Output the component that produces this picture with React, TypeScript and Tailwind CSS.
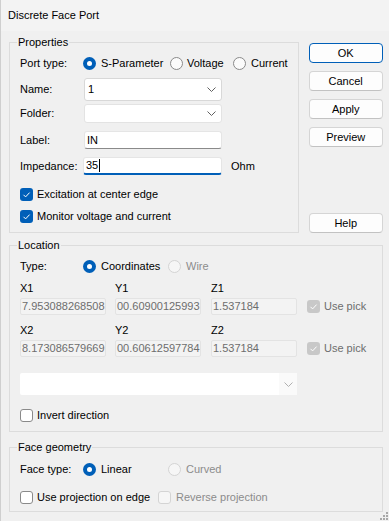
import React from "react";

function Radio({ checked, disabled }: { checked?: boolean; disabled?: boolean }) {
  if (checked) {
    return (
      <span className="flex h-[13px] w-[13px] shrink-0 items-center justify-center rounded-full bg-[#005fb8]">
        <span className="h-[5px] w-[5px] rounded-full bg-white" />
      </span>
    );
  }
  return (
    <span
      className={
        disabled
          ? "h-[13px] w-[13px] shrink-0 rounded-full border border-[#d4d4d4] bg-[#f6f6f6]"
          : "h-[13px] w-[13px] shrink-0 rounded-full border border-[#8a8a8a] bg-[#fbfbfb]"
      }
    />
  );
}

function Check({ checked, disabled }: { checked?: boolean; disabled?: boolean }) {
  if (checked) {
    return (
      <span
        className={
          disabled
            ? "flex h-[13px] w-[13px] shrink-0 items-center justify-center rounded-[3px] bg-[#c8c8c8]"
            : "flex h-[13px] w-[13px] shrink-0 items-center justify-center rounded-[3px] bg-[#005fb8]"
        }
      >
        <svg width="13" height="13" viewBox="0 0 13 13" fill="none" aria-hidden="true">
          <path d="M3.5 6.8 5.6 8.9 9.6 4.6" stroke="white" strokeWidth="1" />
        </svg>
      </span>
    );
  }
  return (
    <span
      className={
        disabled
          ? "h-[13px] w-[13px] shrink-0 rounded-[3px] border border-[#d4d4d4] bg-[#f6f6f6]"
          : "h-[13px] w-[13px] shrink-0 rounded-[3px] border border-[#8a8a8a] bg-white"
      }
    />
  );
}

function Chevron({ color = "#606060" }: { color?: string }) {
  return (
    <svg width="9" height="5" viewBox="0 0 9 5" fill="none" aria-hidden="true">
      <path d="M0.5 0.5 4.5 4.5 8.5 0.5" stroke={color} strokeWidth="1" />
    </svg>
  );
}

function Btn({ label, primary }: { label: string; primary?: boolean }) {
  return (
    <div
      className={
        primary
          ? "flex h-[20px] w-[74px] items-center justify-center rounded-[4px] border border-[#005fb8] bg-[#fdfdfd]"
          : "flex h-[20px] w-[74px] items-center justify-center rounded-[4px] border border-[#d5d5d5] border-b-[#c2c2c2] bg-[#fdfdfd]"
      }
    >
      {label}
    </div>
  );
}

function Coord({ label, value }: { label: string; value: string }) {
  return (
    <div className="flex w-[86px] flex-col">
      <div className="flex h-[16px] items-center">{label}</div>
      <div className="mt-[2px] flex h-[17px] items-center overflow-hidden whitespace-nowrap rounded-[2px] border border-[#e3e3e3] bg-[#f3f3f3] pl-[1px] text-[#6d6d6d]">
        {value}
      </div>
    </div>
  );
}

function UsePick() {
  return (
    <div className="ml-[10px] mt-[18px] flex h-[17px] items-center gap-[4px] text-[#6d6d6d]">
      <Check checked disabled />
      <span>Use pick</span>
    </div>
  );
}

export default function App() {
  return (
    <div className="relative h-[521px] w-[389px] overflow-hidden border-l border-[#cfcfcf] bg-[#f0f0f0] font-['Liberation_Sans',Arial,sans-serif] text-[11px] leading-none text-black">
      <div className="flex h-[31px] items-center bg-[#f3f3f3] pl-[7px] text-[11px]">Discrete Face Port</div>

      <div className="px-[8px]">
        <div className="mt-[3px] flex">
          {/* Properties */}
          <fieldset className="h-[199px] w-[289px] border border-[#dcdcdc]">
            <legend className="ml-[7px] h-[16px] px-[1px] leading-[16px]">Properties</legend>
            <div className="px-[10px]">
              <div className="mt-[5px] flex h-[16px] items-center">
                <span className="w-[63px]">Port type:</span>
                <div className="flex w-[87px] items-center gap-[5px]">
                  <Radio checked />
                  <span>S-Parameter</span>
                </div>
                <div className="flex w-[63px] items-center gap-[4px]">
                  <Radio />
                  <span>Voltage</span>
                </div>
                <div className="flex items-center gap-[5px]">
                  <Radio />
                  <span>Current</span>
                </div>
              </div>

              <div className="mt-[7px] flex h-[23px] items-center">
                <span className="w-[64px]">Name:</span>
                <div className="flex h-[23px] w-[138px] items-center justify-between rounded-[3px] border border-[#d8d8d8] bg-white pl-[3px] pr-[5px]">
                  <span>1</span>
                  <Chevron />
                </div>
              </div>

              <div className="mt-[3px] flex h-[19px] items-center">
                <span className="w-[64px]">Folder:</span>
                <div className="flex h-[19px] w-[138px] items-center justify-end rounded-[3px] border border-[#e3e3e3] bg-white pr-[5px]">
                  <Chevron />
                </div>
              </div>

              <div className="mt-[8px] flex h-[18px] items-center">
                <span className="w-[64px]">Label:</span>
                <div className="flex h-[18px] w-[138px] items-center rounded-[3px] border border-[#e5e5e5] border-b-[#8a8a8a] bg-white pl-[2px]">
                  IN
                </div>
              </div>

              <div className="mt-[8px] flex h-[18px] items-center">
                <span className="w-[63px]">Impedance:</span>
                <div className="flex h-[18px] w-[139px] items-center rounded-[3px] border border-[#e5e5e5] border-b-2 border-b-[#005fb8] bg-white pl-[2px]">
                  35
                  <span className="ml-[1px] h-[13px] w-[1px] bg-black" />
                </div>
                <span className="ml-[9px]">Ohm</span>
              </div>

              <div className="mt-[11px] flex h-[16px] items-center gap-[4px]">
                <Check checked />
                <span>Excitation at center edge</span>
              </div>
              <div className="mt-[6px] flex h-[16px] items-center gap-[4px]">
                <Check checked />
                <span>Monitor voltage and current</span>
              </div>
            </div>
          </fieldset>

          {/* Buttons */}
          <div className="ml-[10px] flex h-[199px] flex-col gap-[8px] pt-[9px]">
            <Btn label="OK" primary />
            <Btn label="Cancel" />
            <Btn label="Apply" />
            <Btn label="Preview" />
            <div className="mt-auto">
              <Btn label="Help" />
            </div>
          </div>
        </div>

        {/* Location */}
        <fieldset className="mt-[4px] w-[374px] border border-[#dcdcdc] pb-[8px]">
          <legend className="ml-[7px] h-[16px] px-[1px] leading-[16px]">Location</legend>
          <div className="px-[10px]">
            <div className="mt-[5px] flex h-[16px] items-center">
              <span className="w-[63px]">Type:</span>
              <div className="flex w-[85px] items-center gap-[5px]">
                <Radio checked />
                <span>Coordinates</span>
              </div>
              <div className="flex items-center gap-[5px] text-[#8c8c8c]">
                <Radio disabled />
                <span>Wire</span>
              </div>
            </div>

            <div className="mt-[6px] flex">
              <Coord label="X1" value="7.953088268508" />
              <div className="ml-[9px]">
                <Coord label="Y1" value="00.60900125993" />
              </div>
              <div className="ml-[10px]">
                <Coord label="Z1" value="1.537184" />
              </div>
              <UsePick />
            </div>

            <div className="mt-[7px] flex">
              <Coord label="X2" value="8.173086579669" />
              <div className="ml-[9px]">
                <Coord label="Y2" value="00.60612597784" />
              </div>
              <div className="ml-[10px]">
                <Coord label="Z2" value="1.537184" />
              </div>
              <UsePick />
            </div>

            <div className="mt-[16px] flex h-[22px] w-[277px] items-center justify-end rounded-[2px] bg-white">
              <div className="flex h-[22px] w-[18px] items-center justify-center bg-[#fafafa]">
                <Chevron color="#b0b0b0" />
              </div>
            </div>

            <div className="mt-[12px] flex h-[16px] items-center gap-[4px]">
              <Check />
              <span>Invert direction</span>
            </div>
          </div>
        </fieldset>

        {/* Face geometry */}
        <fieldset className="mt-[7px] w-[374px] border border-[#dcdcdc] pb-[6px]">
          <legend className="ml-[7px] h-[16px] px-[1px] leading-[16px]">Face geometry</legend>
          <div className="px-[10px]">
            <div className="mt-[6px] flex h-[16px] items-center">
              <span className="w-[63px]">Face type:</span>
              <div className="flex w-[85px] items-center gap-[5px]">
                <Radio checked />
                <span>Linear</span>
              </div>
              <div className="flex items-center gap-[5px] text-[#8c8c8c]">
                <Radio disabled />
                <span>Curved</span>
              </div>
            </div>
            <div className="mt-[12px] flex h-[16px] items-center">
              <div className="flex w-[138px] items-center gap-[4px]">
                <Check />
                <span>Use projection on edge</span>
              </div>
              <div className="flex items-center gap-[5px] text-[#8c8c8c]">
                <Check disabled />
                <span>Reverse projection</span>
              </div>
            </div>
          </div>
        </fieldset>
      </div>

      {/* resize grip */}
      <svg className="absolute bottom-0 right-0" width="9" height="9" viewBox="0 0 9 9" aria-hidden="true">
        <rect x="6" y="0" width="2" height="2" fill="#a8a8a8" />
        <rect x="3" y="3" width="2" height="2" fill="#a8a8a8" />
        <rect x="6" y="3" width="2" height="2" fill="#a8a8a8" />
        <rect x="0" y="6" width="2" height="2" fill="#a8a8a8" />
        <rect x="3" y="6" width="2" height="2" fill="#a8a8a8" />
        <rect x="6" y="6" width="2" height="2" fill="#a8a8a8" />
      </svg>
    </div>
  );
}
